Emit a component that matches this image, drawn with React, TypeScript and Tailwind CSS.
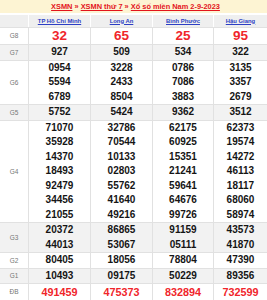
import React from "react";

const COLS = "grid grid-cols-[28px_62px_62px_61px_54px]";

type Kind = "normal" | "g8" | "db";

const rows: { label: string; kind: Kind; gray: boolean; vals: string[][] }[] = [
  { label: "G8", kind: "g8", gray: false, vals: [["32"], ["65"], ["25"], ["95"]] },
  { label: "G7", kind: "normal", gray: true, vals: [["927"], ["509"], ["534"], ["322"]] },
  {
    label: "G6",
    kind: "normal",
    gray: false,
    vals: [
      ["0954", "5594", "6789"],
      ["3228", "2433", "8504"],
      ["0786", "7086", "3883"],
      ["3135", "3357", "2679"],
    ],
  },
  { label: "G5", kind: "normal", gray: true, vals: [["5752"], ["5424"], ["9362"], ["3512"]] },
  {
    label: "G4",
    kind: "normal",
    gray: false,
    vals: [
      ["71070", "35928", "14370", "18493", "92479", "34456", "21055"],
      ["32786", "70544", "10133", "02803", "55762", "41640", "49216"],
      ["62175", "60925", "15351", "21241", "59641", "64676", "99726"],
      ["62373", "19574", "14272", "46113", "18117", "68060", "58974"],
    ],
  },
  {
    label: "G3",
    kind: "normal",
    gray: true,
    vals: [
      ["20372", "44013"],
      ["86865", "53067"],
      ["91159", "05111"],
      ["43573", "41870"],
    ],
  },
  { label: "G2", kind: "normal", gray: false, vals: [["80405"], ["18056"], ["78804"], ["47390"]] },
  { label: "G1", kind: "normal", gray: true, vals: [["10493"], ["09175"], ["50229"], ["89356"]] },
  { label: "ĐB", kind: "db", gray: false, vals: [["491459"], ["475373"], ["832894"], ["732599"]] },
];

function numClass(kind: Kind) {
  if (kind === "g8") return "text-[13.5px] leading-[16.3px] font-bold text-[#f0252b]";
  if (kind === "db") return "text-[10.8px] leading-[16px] font-bold text-[#f0252b]";
  return "text-[10px] leading-[14.5px] font-bold text-[#151515]";
}

export default function App() {
  return (
    <div className="w-[267px] h-[300px] overflow-hidden bg-white font-['Liberation_Sans',Arial,sans-serif]">
      <div className="h-[13px] bg-[#fdf4d3] flex items-center justify-center pl-[4px] text-[7.4px] font-bold text-[#e3141c] whitespace-nowrap">
        <span className="underline">XSMN</span>
        <span>&nbsp;»&nbsp;</span>
        <span className="underline">XSMN thứ 7</span>
        <span>&nbsp;»&nbsp;</span>
        <span className="underline">Xổ số miền Nam 2-9-2023</span>
      </div>
      <div className={`${COLS} mt-[2px] h-[12px] bg-[#efefef] text-[5.9px] font-bold text-[#2d3fc4]`}>
        <div />
        {["TP Hồ Chí Minh", "Long An", "Bình Phước", "Hậu Giang"].map((t) => (
          <div key={t} className="border-l border-white flex items-center justify-center">
            <span className="underline whitespace-nowrap">{t}</span>
          </div>
        ))}
      </div>
      {rows.map((r) => (
        <div
          key={r.label}
          className={`${COLS} border-t border-[#e1e1e1] ${r.gray ? "bg-[#f2f2f2]" : "bg-white"}`}
        >
          <div className="flex items-center justify-center text-[6.5px] text-[#777]">{r.label}</div>
          {r.vals.map((col, i) => (
            <div key={i} className="border-l border-[#e1e1e1] flex flex-col items-center">
              {col.map((v, j) => (
                <div key={j} className={numClass(r.kind)}>
                  {v}
                </div>
              ))}
            </div>
          ))}
        </div>
      ))}
    </div>
  );
}
